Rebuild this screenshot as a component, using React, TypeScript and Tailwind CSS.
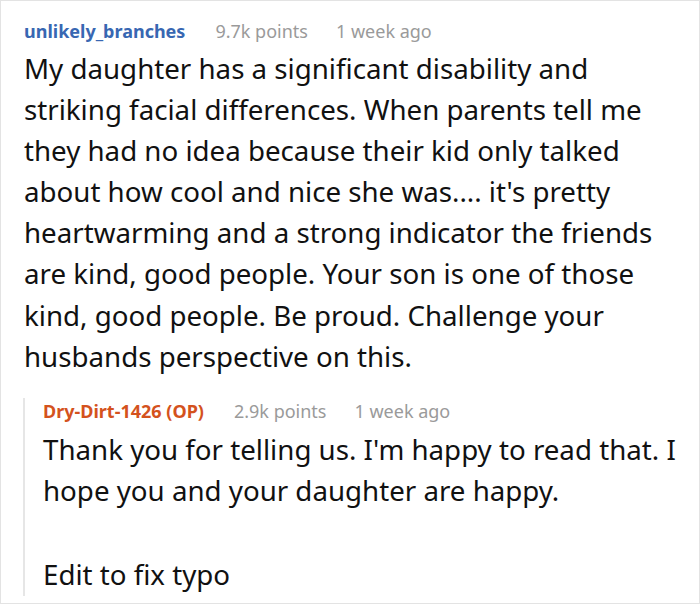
import React from 'react';

const mainLines = [
  'My daughter has a significant disability and',
  'striking facial differences. When parents tell me',
  'they had no idea because their kid only talked',
  "about how cool and nice she was.... it's pretty",
  'heartwarming and a strong indicator the friends',
  'are kind, good people. Your son is one of those',
  'kind, good people. Be proud. Challenge your',
  'husbands perspective on this.',
];

const App: React.FC = () => {
  return (
    <div
      className="w-[700px] h-[604px] overflow-hidden border border-[#e3e3e3] bg-white text-[#111]"
      style={{ fontFamily: '"Noto Sans", "Open Sans", sans-serif' }}
    >
      <div className="pl-[23px] pt-[17px]">
        <div className="flex items-baseline gap-[30px] text-[18px] leading-[26px]">
          <span className="font-bold text-[#3867b2]">unlikely_branches</span>
          <span className="text-[#9a9a9a]">9.7k points</span>
          <span className="-ml-[2px] text-[#9a9a9a]">1 week ago</span>
        </div>
        <div className="mt-[4px] text-[27.7px] leading-[41.1px] whitespace-nowrap">
          {mainLines.map((l, i) => (
            <div key={i}>{l}</div>
          ))}
        </div>

        <div className="mt-[21px] -ml-[1px] border-l-2 border-[#e6e6e6] pl-[18px]">
          <div className="flex items-baseline gap-[30px] text-[18px] leading-[26px]">
            <span className="font-bold text-[#d4521d]">Dry-Dirt-1426 (OP)</span>
            <span className="text-[#9a9a9a]">2.9k points</span>
            <span className="-ml-[2px] text-[#9a9a9a]">1 week ago</span>
          </div>
          <div className="mt-[5px] text-[27.7px] leading-[41.7px] whitespace-nowrap">
            <div>Thank you for telling us. I'm happy to read that. I</div>
            <div>hope you and your daughter are happy.</div>
            <div>&nbsp;</div>
            <div className="-mb-[10px]">Edit to fix typo</div>
          </div>
        </div>
      </div>
    </div>
  );
};

export default App;
